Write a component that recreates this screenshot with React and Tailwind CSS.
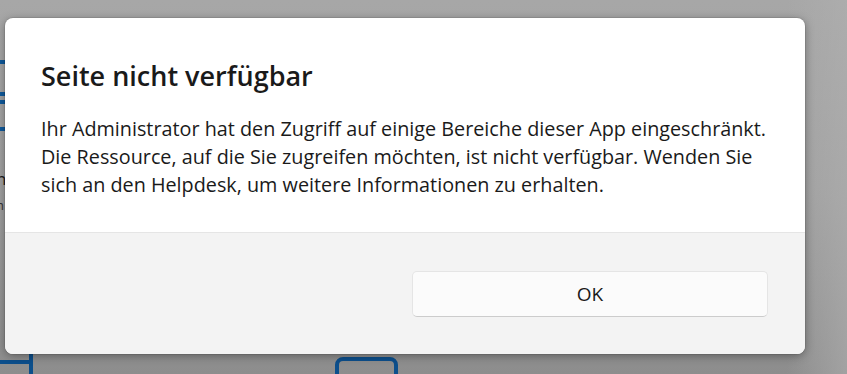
import React from 'react'

function Backdrop() {
  return (
    <div className="absolute inset-0 overflow-hidden bg-gradient-to-b from-[#a7a7a7] via-[#a0a0a0] to-[#8d8d8d]">
      <div className="absolute left-0 top-[60px] h-[4px] w-[5px] bg-[#0f5a9c]" />
      <div className="absolute left-0 top-[92px] h-[4px] w-[5px] bg-[#0f5a9c]" />
      <div className="absolute left-0 top-[100px] h-[4px] w-[5px] bg-[#0f5a9c]" />
      <div className="absolute left-0 top-[127px] h-[4px] w-[5px] bg-[#0f5a9c]" />
      <div className="absolute left-[-4px] top-[166px] text-[17px] text-[#1a1a1a]">n</div>
      <div className="absolute left-[-4px] top-[196px] text-[13px] text-[#333]">h</div>
      <div className="absolute left-[-10px] top-[360px] h-[4px] w-[42px] bg-[#0c4f8c]" />
      <div className="absolute left-[29px] top-[350px] h-[30px] w-[4px] bg-[#0c4f8c]" />
      <div className="absolute left-[335px] top-[357px] h-[40px] w-[63px] rounded-[8px] border-[4px] border-[#0c4f8c]" />
      <div className="absolute right-0 top-0 h-full w-[60px] bg-gradient-to-r from-transparent to-[#b0b0b0]/60" />
    </div>
  )
}

export default function App() {
  return (
    <div
      className="relative h-[374px] w-[847px] overflow-hidden"
      style={{ fontFamily: '"Open Sans", "Noto Sans", sans-serif' }}
    >
      <Backdrop />
      <div className="relative pl-[5px] pt-[18px]">
        <div className="flex h-[336px] w-[800px] flex-col overflow-hidden rounded-[8px] bg-white shadow-[0_2px_10px_rgba(0,0,0,0.35),0_0_0_1px_rgba(0,0,0,0.08)]">
          <div className="h-[215px] border-b border-[#e5e5e5] px-[36px] pt-[39px]">
            <h1 className="text-[27px] font-semibold leading-[38px] text-[#1a1a1a]">Seite nicht verfügbar</h1>
            <p className="mt-[20px] text-[19.8px] leading-[28px] text-[#1a1a1a]">
              Ihr Administrator hat den Zugriff auf einige Bereiche dieser App eingeschränkt.
              <br />
              Die Ressource, auf die Sie zugreifen möchten, ist nicht verfügbar. Wenden Sie
              <br />
              sich an den Helpdesk, um weitere Informationen zu erhalten.
            </p>
          </div>
          <div className="flex flex-1 items-start justify-end bg-[#f3f3f3] pr-[37px] pt-[38px]">
            <button className="h-[46px] w-[356px] rounded-[5px] border border-[#e5e5e5] border-b-[#cccccc] bg-[#fbfbfb] text-[19px] text-[#1a1a1a]">
              OK
            </button>
          </div>
        </div>
      </div>
    </div>
  )
}
